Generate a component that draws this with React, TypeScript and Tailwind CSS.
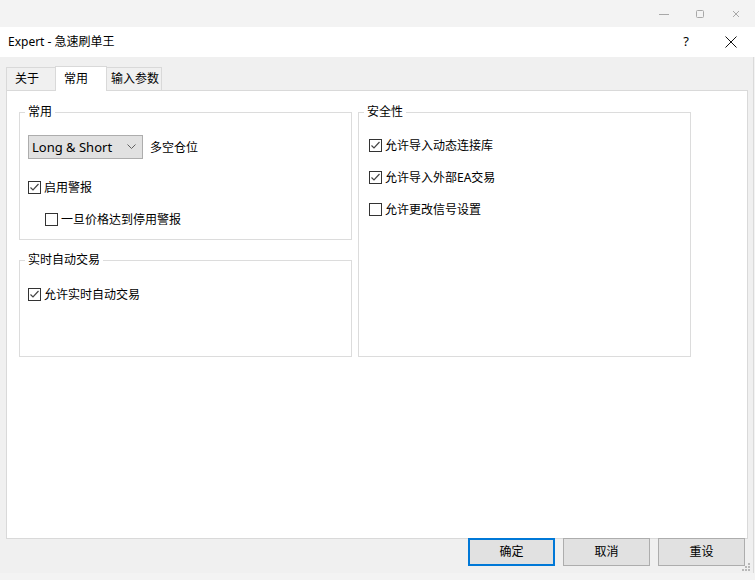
const FONT = { fontFamily: '"Noto Sans", "Noto Sans CJK SC", sans-serif' }

function CheckBox({ checked, label }: { checked: boolean; label: string }) {
  return (
    <div className="flex h-[13px] items-center">
      <div className="flex h-[13px] w-[13px] shrink-0 items-center justify-center border border-[#333333] bg-white">
        {checked && (
          <svg width="11" height="11" viewBox="0 0 11 11">
            <polyline points="1.5,5.5 4,8 9.5,2" fill="none" stroke="#444444" strokeWidth="1.2" />
          </svg>
        )}
      </div>
      <span className="ml-[3px] whitespace-nowrap text-[12px] leading-[13px] text-black">{label}</span>
    </div>
  )
}

function Group({ title, className, children }: { title: string; className: string; children: React.ReactNode }) {
  return (
    <div className={`relative border border-[#dcdcdc] bg-white ${className}`}>
      <span className="absolute left-[5px] top-[-8px] bg-white px-[3px] text-[12px] leading-[14px] text-black">
        {title}
      </span>
      {children}
    </div>
  )
}

export default function App() {
  return (
    <div className="relative h-[580px] w-[755px] overflow-hidden bg-[#f3f3f3] text-black" style={FONT}>
      {/* outer window controls */}
      <div className="flex h-[27px] items-center justify-end gap-[26px] pr-[14px]">
        <svg width="10" height="10" viewBox="0 0 10 10">
          <line x1="0" y1="5.5" x2="10" y2="5.5" stroke="#a8a8a8" strokeWidth="1" />
        </svg>
        <svg width="10" height="10" viewBox="0 0 10 10">
          <rect x="1.5" y="1.5" width="7" height="7" rx="1" fill="none" stroke="#a8a8a8" strokeWidth="1" />
        </svg>
        <svg width="10" height="10" viewBox="0 0 10 10">
          <path d="M2 2 L8 8 M8 2 L2 8" stroke="#a8a8a8" strokeWidth="1" />
        </svg>
      </div>

      {/* dialog title */}
      <div className="flex h-[30px] items-center justify-between bg-white pl-[8px] pr-[18px]">
        <span className="text-[12px]">Expert - 急速刷单王</span>
        <div className="flex items-center gap-[36px]">
          <span className="text-[13px]">?</span>
          <svg width="12" height="12" viewBox="0 0 12 12">
            <path d="M0.5 0.5 L11.5 11.5 M11.5 0.5 L0.5 11.5" stroke="#111111" strokeWidth="1" />
          </svg>
        </div>
      </div>

      {/* dialog body */}
      <div className="relative h-[516px] w-[754px] border-r border-[#dadada] bg-[#f0f0f0] pl-[6px] pt-[9px]">
        <div className="flex h-[24px] items-end">
          <div className="flex h-[23px] w-[49px] items-center border-l border-t border-[#d9d9d9] pl-[8px] text-[12px]">
            关于
          </div>
          <div className="relative z-10 mb-[-1px] flex h-[25px] w-[52px] items-start border-x border-t border-[#d9d9d9] bg-white pl-[8px] pt-[3px] text-[12px]">
            常用
          </div>
          <div className="flex h-[23px] w-[55px] items-center border-r border-t border-[#d9d9d9] pl-[4px] text-[12px]">
            输入参数
          </div>
        </div>

        <div className="flex h-[449px] w-[742px] gap-[6px] border border-[#d9d9d9] bg-white pl-[12px] pt-[21px]">
          <div className="flex w-[333px] flex-col gap-[20px]">
            <Group title="常用" className="h-[128px] pl-[8px]">
              <div className="mt-[22px] flex items-center">
                <div className="flex h-[24px] w-[115px] items-center justify-between border border-[#adadad] bg-[#e1e1e1] pl-[3px] pr-[6px]">
                  <span className="text-[13px] leading-none">Long &amp; Short</span>
                  <svg width="9" height="6" viewBox="0 0 9 6">
                    <polyline points="0.5,0.5 4.5,4.5 8.5,0.5" fill="none" stroke="#606060" strokeWidth="1" />
                  </svg>
                </div>
                <span className="ml-[7px] pt-[2px] text-[12px]">多空仓位</span>
              </div>
              <div className="mt-[22px]">
                <CheckBox checked label="启用警报" />
              </div>
              <div className="mt-[19px] pl-[17px]">
                <CheckBox checked={false} label="一旦价格达到停用警报" />
              </div>
            </Group>
            <Group title="实时自动交易" className="h-[97px] pl-[8px] pt-[27px]">
              <CheckBox checked label="允许实时自动交易" />
            </Group>
          </div>

          <Group title="安全性" className="flex h-[245px] w-[333px] flex-col gap-[19px] pl-[10px] pt-[26px]">
            <CheckBox checked label="允许导入动态连接库" />
            <CheckBox checked label="允许导入外部EA交易" />
            <CheckBox checked={false} label="允许更改信号设置" />
          </Group>
        </div>

        <div className="-mt-px flex justify-end gap-[8px] pr-[8px]">
          <button className="h-[28px] w-[87px] border-2 border-[#0078d7] bg-[#e1e1e1] text-[12px]">确定</button>
          <button className="h-[28px] w-[87px] border border-[#adadad] bg-[#e1e1e1] text-[12px]">取消</button>
          <button className="h-[28px] w-[87px] border border-[#adadad] bg-[#e1e1e1] text-[12px]">重设</button>
        </div>

        <svg className="absolute bottom-[1px] right-[2px]" width="9" height="9" viewBox="0 0 9 9">
          <rect x="6" y="0" width="2" height="2" fill="#b8b8b8" />
          <rect x="3" y="3" width="2" height="2" fill="#b8b8b8" />
          <rect x="6" y="3" width="2" height="2" fill="#b8b8b8" />
          <rect x="0" y="6" width="2" height="2" fill="#b8b8b8" />
          <rect x="3" y="6" width="2" height="2" fill="#b8b8b8" />
          <rect x="6" y="6" width="2" height="2" fill="#b8b8b8" />
        </svg>
      </div>
    </div>
  )
}
